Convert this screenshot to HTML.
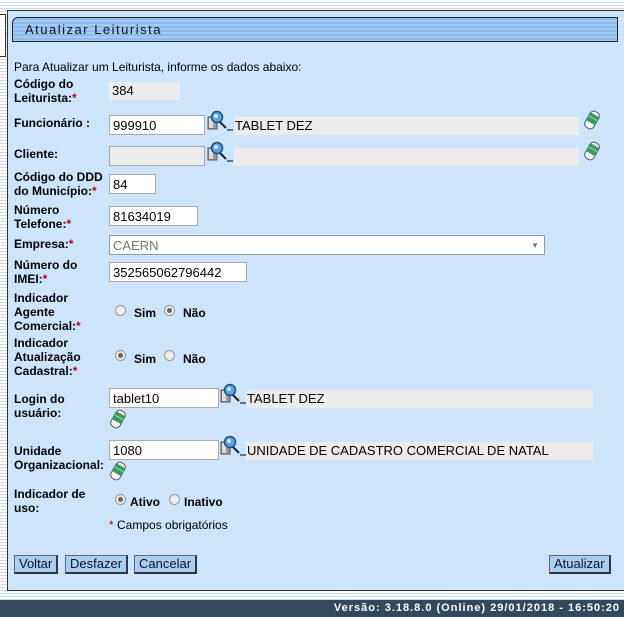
<!DOCTYPE html>
<html><head><meta charset="utf-8"><style>
*{margin:0;padding:0;box-sizing:border-box}
body{width:624px;height:617px;position:relative;overflow:hidden;font-family:"Liberation Sans",Arial,sans-serif;font-size:12px;color:#000;
background:repeating-linear-gradient(#fff 0 2px,#c8dcef 2px 3px);}
.a{position:absolute}
#panel{left:7px;top:10px;width:617px;height:581px;background:#cce5fd;border:1px solid #333;border-right:none}
#title{left:12px;top:17px;width:606px;height:25px;border:1px solid #223;border-radius:6px 0 0 0;
background:repeating-linear-gradient(#8dbbee 0 2px,#a6cbf3 2px 4px);font-size:13px;letter-spacing:1.5px;padding:4px 0 0 12px;color:#112}
.l{font-weight:bold;font-size:12px;line-height:14px}
.r{color:#c00}
.in{height:20px;background:#fff;border:1px solid #aaa;font-size:13px;padding:2px 3px;line-height:15px}
.ro{background:#ececec;height:18px;font-size:13px;padding:1px 1px}
.btn{height:19px;background:#a7cff5;border:1px solid #666;border-right:2px solid #334;border-bottom:2px solid #334;font-size:13px;padding:0 4px;line-height:16px;color:#112}
.rad{width:11px;height:11px;border:1px solid #999;border-radius:50%;background:#eee}
.rad.on::after{content:"";position:absolute;left:2px;top:2px;width:5px;height:5px;border-radius:50%;background:#666}
#foot{left:0;top:600px;width:624px;height:17px;background:#34495e;color:#fff;font-family:"Liberation Sans",Arial,sans-serif;font-weight:bold;font-size:11px;letter-spacing:1px;text-align:right;padding:2px 4px 0 0}
</style></head><body>
<div class="a" id="panel"></div>
<div class="a" style="left:0;top:14px;width:6px;height:43px;border:1px solid #333;border-left:none;background:#fff"></div>
<div class="a" id="title">Atualizar Leiturista</div>
<div class="a" style="left:14px;top:60px;font-size:12px">Para Atualizar um Leiturista, informe os dados abaixo:</div>

<div class="a l" style="left:14px;top:77px">Código do<br>Leiturista:<span class="r">*</span></div>
<div class="a ro" style="left:109px;top:82px;width:71px;padding-left:3px">384</div>

<div class="a l" style="left:14px;top:116px">Funcionário :</div>
<div class="a in" style="left:109px;top:115px;width:96px">999910</div>
<div class="a ro" style="left:234px;top:117px;width:345px">TABLET DEZ</div>

<div class="a l" style="left:14px;top:147px">Cliente:</div>
<div class="a in" style="left:109px;top:146px;width:96px;background:#ececec"></div>
<div class="a ro" style="left:234px;top:148px;width:345px"></div>

<div class="a l" style="left:14px;top:170px">Código do DDD<br>do Município:<span class="r">*</span></div>
<div class="a in" style="left:109px;top:174px;width:47px">84</div>

<div class="a l" style="left:14px;top:203px">Número<br>Telefone:<span class="r">*</span></div>
<div class="a in" style="left:109px;top:206px;width:89px">81634019</div>

<div class="a l" style="left:14px;top:237px">Empresa:<span class="r">*</span></div>
<div class="a in" style="left:109px;top:235px;width:436px;color:#777;border-color:#999">CAERN<span style="position:absolute;right:5px;top:2px;font-size:8px;color:#777">▼</span></div>

<div class="a l" style="left:14px;top:258px">Número do<br>IMEI:<span class="r">*</span></div>
<div class="a in" style="left:109px;top:262px;width:138px">352565062796442</div>

<div class="a l" style="left:14px;top:291px">Indicador<br>Agente<br>Comercial:<span class="r">*</span></div>
<div class="a rad" style="left:115px;top:305px"></div><div class="a l" style="left:134px;top:306px">Sim</div>
<div class="a rad on" style="left:164px;top:305px"></div><div class="a l" style="left:183px;top:306px">Não</div>

<div class="a l" style="left:14px;top:336px">Indicador<br>Atualização<br>Cadastral:<span class="r">*</span></div>
<div class="a rad on" style="left:115px;top:350px"></div><div class="a l" style="left:134px;top:352px">Sim</div>
<div class="a rad" style="left:164px;top:350px"></div><div class="a l" style="left:183px;top:352px">Não</div>

<div class="a l" style="left:14px;top:392px">Login do<br>usuário:</div>
<div class="a in" style="left:109px;top:388px;width:110px">tablet10</div>
<div class="a ro" style="left:246px;top:390px;width:347px">TABLET DEZ</div>

<div class="a l" style="left:14px;top:444px">Unidade<br>Organizacional:</div>
<div class="a in" style="left:109px;top:440px;width:110px">1080</div>
<div class="a ro" style="left:246px;top:442px;width:347px">UNIDADE DE CADASTRO COMERCIAL DE NATAL</div>

<div class="a l" style="left:14px;top:487px">Indicador de<br>uso:</div>
<div class="a rad on" style="left:115px;top:494px"></div><div class="a l" style="left:130px;top:495px">Ativo</div>
<div class="a rad" style="left:169px;top:494px"></div><div class="a l" style="left:184px;top:495px">Inativo</div>
<div class="a" style="left:109px;top:518px"><span class="r">*</span> Campos obrigatórios</div>

<svg width="0" height="0" style="position:absolute"><defs>
<g id="lup"><rect x="1" y="7" width="9" height="12" fill="#999" stroke="#555"/><rect x="2" y="8" width="4" height="10" fill="#ddd"/><line x1="12" y1="11" x2="19" y2="18" stroke="#222" stroke-width="2"/><circle cx="10" cy="7" r="5.5" fill="#5aa5e0" stroke="#1a4f80" stroke-width="1.5"/><circle cx="9" cy="6" r="2" fill="#cfe8ff"/><line x1="20" y1="20" x2="26" y2="20" stroke="#000"/></g>
<g id="era"><g transform="rotate(30 9 10)"><rect x="4" y="1" width="10" height="18" rx="4" fill="#fff" stroke="#555"/><rect x="4" y="4" width="10" height="9" fill="#3a9a60"/><line x1="4" y1="8" x2="14" y2="8" stroke="#9fdcb0"/></g></g>
</defs></svg>
<svg class="a" style="left:207px;top:110px" width="27" height="22"><use href="#lup"/></svg>
<svg class="a" style="left:207px;top:141px" width="27" height="22"><use href="#lup"/></svg>
<svg class="a" style="left:220px;top:383px" width="27" height="22"><use href="#lup"/></svg>
<svg class="a" style="left:220px;top:435px" width="27" height="22"><use href="#lup"/></svg>
<svg class="a" style="left:583px;top:110px" width="18" height="20"><use href="#era"/></svg>
<svg class="a" style="left:583px;top:141px" width="18" height="20"><use href="#era"/></svg>
<svg class="a" style="left:109px;top:409px" width="18" height="20"><use href="#era"/></svg>
<svg class="a" style="left:109px;top:461px" width="18" height="20"><use href="#era"/></svg>

<div class="a btn" style="left:14px;top:555px">Voltar</div>
<div class="a btn" style="left:65px;top:555px">Desfazer</div>
<div class="a btn" style="left:134px;top:555px">Cancelar</div>
<div class="a btn" style="left:549px;top:555px">Atualizar</div>

<div class="a" id="foot">Versão: 3.18.8.0 (Online) 29/01/2018 - 16:50:20</div>
</body></html>
